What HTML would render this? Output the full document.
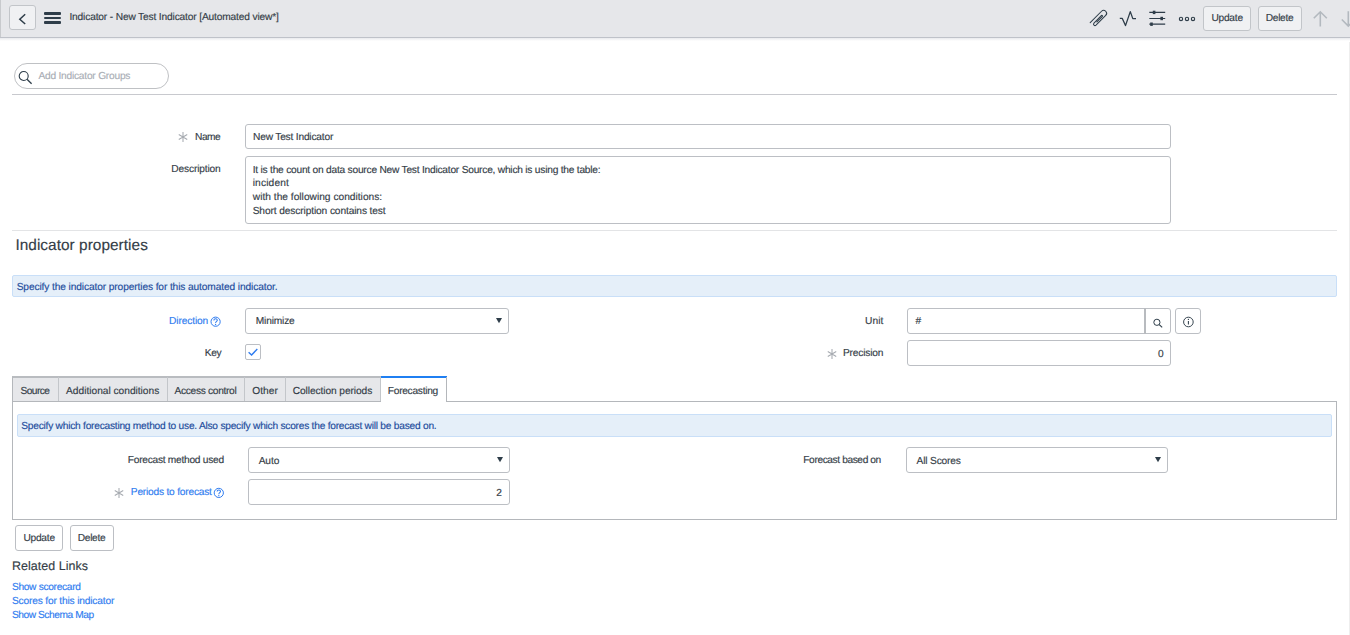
<!DOCTYPE html>
<html><head><meta charset="utf-8"><title>Indicator - New Test Indicator</title>
<style>
html,body{margin:0;padding:0;background:#fff;width:1350px;height:635px;overflow:hidden;position:relative;}
body{font-family:"Liberation Sans",sans-serif;}
.a{position:absolute;}
.t{position:absolute;white-space:nowrap;line-height:1;text-rendering:geometricPrecision;-webkit-text-stroke:0.15px currentColor;font-family:"Liberation Sans",sans-serif;}
.ast{position:absolute;font-family:"Liberation Sans",sans-serif;font-size:13px;line-height:1;color:#a6aaaf;}
</style></head><body>
<div class="a" style="left:0px;top:0px;width:1350px;height:37px;background:#e6e7ea;"></div>
<div class="a" style="left:0px;top:37px;width:1350px;height:1px;background:#bfc2c9;"></div>
<div class="a" style="left:0px;top:38px;width:1350px;height:3px;background:linear-gradient(#e9eaed,#fff);"></div>
<div class="a" style="left:0px;top:0px;width:1px;height:37px;background:#c8cacd;"></div>
<div class="a" style="left:9px;top:5px;width:27px;height:25px;background:#f0f1f3;border:1px solid #c2c5c9;border-radius:3px;box-sizing:border-box;"></div>
<svg class="a" style="left:9px;top:5px" width="26" height="25" viewBox="0 0 26 25"><path d="M16.2 9.3 L10.8 14.2 L16.2 19" fill="none" stroke="#2e3d49" stroke-width="1.5"/></svg>
<div class="a" style="left:44px;top:12px;width:17px;height:2.6px;background:#2e3d49;border-radius:1px;"></div>
<div class="a" style="left:44px;top:16.8px;width:17px;height:2.6px;background:#2e3d49;border-radius:1px;"></div>
<div class="a" style="left:44px;top:21.3px;width:17px;height:2.6px;background:#2e3d49;border-radius:1px;"></div>
<div class="t" style="left:69.40px;top:13px;font-size:10.2px;letter-spacing:-0.153px;color:#343d47;">Indicator - New Test Indicator [Automated view*]</div>
<svg class="a" style="left:1086px;top:6px" width="24" height="24" viewBox="0 0 24 24"><path d="M4.2 16.6 L15.55 5.25 A2.93 2.93 0 0 1 19.7 9.4 L10 19.1 A1.45 1.45 0 0 1 7.95 17.05 L15.5 9.5 A0.64 0.64 0 0 1 16.4 10.4 L10.9 15.9" fill="none" stroke="#2e3d49" stroke-width="1.05" stroke-linecap="round"/></svg>
<svg class="a" style="left:1118px;top:9px" width="20" height="20" viewBox="0 0 20 20"><path d="M1.8 9.4 L4.3 9.4 L7.5 16.6 L12.3 2.6 L14.8 9.6 L18 9.6" fill="none" stroke="#2e3d49" stroke-width="1.3" stroke-linejoin="round"/></svg>
<svg class="a" style="left:1148px;top:9px" width="20" height="20" viewBox="0 0 20 20"><path d="M1.3 3.4 H17.2 M1.3 9.5 H17.2 M1.3 15.2 H17.2" stroke="#2e3d49" stroke-width="1.2"/><rect x="4.8" y="1.7" width="2.6" height="3.4" fill="#2e3d49"/><rect x="12.4" y="7.8" width="2.6" height="3.4" fill="#2e3d49"/><rect x="2.2" y="13.5" width="2.6" height="3.4" fill="#2e3d49"/></svg>
<svg class="a" style="left:1177px;top:14px" width="20" height="9" viewBox="0 0 20 9"><circle cx="4" cy="4.9" r="1.65" fill="none" stroke="#2e3d49" stroke-width="1.15"/><circle cx="10" cy="4.9" r="1.65" fill="none" stroke="#2e3d49" stroke-width="1.15"/><circle cx="16" cy="4.9" r="1.65" fill="none" stroke="#2e3d49" stroke-width="1.15"/></svg>
<div class="a" style="left:1203px;top:6px;width:48px;height:25px;background:#f0f1f3;border:1px solid #c2c5c9;border-radius:3px;box-sizing:border-box;"></div>
<div class="t" style="left:1211.40px;top:14px;font-size:10.2px;letter-spacing:-0.240px;color:#343d47;">Update</div>
<div class="a" style="left:1258px;top:6px;width:44px;height:25px;background:#f0f1f3;border:1px solid #c2c5c9;border-radius:3px;box-sizing:border-box;"></div>
<div class="t" style="left:1265.80px;top:14px;font-size:10.2px;letter-spacing:-0.334px;color:#343d47;">Delete</div>
<svg class="a" style="left:1300px;top:0px" width="50" height="37" viewBox="0 0 50 37"><path d="M20.3 11.6 V26.6 M13.8 18.3 L20.3 11.8 L26.8 18.3 M48.3 11.2 V26.2 M41.8 19.5 L48.3 26 L54.8 19.5" fill="none" stroke="#b3b9bf" stroke-width="1.6"/></svg>
<div class="a" style="left:1349px;top:42px;width:1px;height:593px;background:#eeeeee;"></div>
<div class="a" style="left:14px;top:63px;width:155px;height:26px;border:1px solid #bfc1c4;border-radius:13px;box-sizing:border-box;background:#fff;"></div>
<svg class="a" style="left:16px;top:69px" width="20" height="18" viewBox="0 0 20 18"><circle cx="7.7" cy="7" r="4.5" fill="none" stroke="#2e3d49" stroke-width="1.1"/><path d="M11 10.2 L15.6 14.7" stroke="#2e3d49" stroke-width="1.3"/></svg>
<div class="t" style="left:38.40px;top:72px;font-size:10.2px;letter-spacing:-0.222px;color:#a9aeb5;">Add Indicator Groups</div>
<div class="a" style="left:12px;top:94px;width:1325px;height:1px;background:#c8c9ce;"></div>
<svg class="a" style="left:177.20px;top:130.90px" width="12" height="12" viewBox="0 0 12 12"><path d="M6.00 1.10 L6.00 10.90 M10.24 3.55 L1.76 8.45 M10.24 8.45 L1.76 3.55 " stroke="#a7abb1" stroke-width="1.05" fill="none"/></svg>
<div class="t" style="left:195.00px;top:133px;font-size:10.2px;letter-spacing:-0.470px;color:#343d47;">Name</div>
<div class="a" style="left:245px;top:124px;width:926px;height:25px;border:1px solid #bcbfc4;border-radius:3px;box-sizing:border-box;"></div>
<div class="t" style="left:253.00px;top:133px;font-size:10.2px;letter-spacing:-0.195px;color:#343d47;">New Test Indicator</div>
<div class="t" style="left:171.30px;top:165px;font-size:10.2px;letter-spacing:-0.150px;color:#343d47;">Description</div>
<div class="a" style="left:245px;top:156px;width:926px;height:68px;border:1px solid #bcbfc4;border-radius:3px;box-sizing:border-box;"></div>
<div class="t" style="left:252.70px;top:166px;font-size:10.2px;letter-spacing:-0.223px;color:#343d47;">It is the count on data source New Test Indicator Source, which is using the table:</div>
<div class="t" style="left:252.70px;top:179px;font-size:10.2px;letter-spacing:0.159px;color:#343d47;">incident</div>
<div class="t" style="left:252.80px;top:193px;font-size:10.2px;letter-spacing:0.009px;color:#343d47;">with the following conditions:</div>
<div class="t" style="left:252.70px;top:207px;font-size:10.2px;letter-spacing:-0.116px;color:#343d47;">Short description contains test</div>
<div class="a" style="left:12px;top:230px;width:1325px;height:1px;background:#e3e4e6;"></div>
<div class="t" style="left:15.40px;top:238px;font-size:15.4px;letter-spacing:0.037px;color:#343d47;">Indicator properties</div>
<div class="a" style="left:12px;top:275px;width:1325px;height:22px;background:#e5eff9;border:1px solid #c9dff8;border-radius:2px;box-sizing:border-box;"></div>
<div class="t" style="left:16.70px;top:283px;font-size:10.2px;letter-spacing:-0.114px;color:#1d4c9c;">Specify the indicator properties for this automated indicator.</div>
<div class="t" style="left:169.10px;top:317px;font-size:10.2px;letter-spacing:-0.130px;color:#2f7cf0;">Direction</div>
<svg class="a" style="left:210px;top:316px" width="12" height="12" viewBox="0 0 12 12"><circle cx="5.6" cy="5.7" r="4.6" fill="none" stroke="#2f7cf0" stroke-width="1"/><path d="M3.9 4.4 C3.9 3.3 4.7 2.8 5.6 2.8 C6.6 2.8 7.3 3.4 7.3 4.3 C7.3 5.4 5.6 5.5 5.6 7" fill="none" stroke="#2f7cf0" stroke-width="1.05"/><circle cx="5.6" cy="8.5" r="0.65" fill="#2f7cf0"/></svg>
<div class="a" style="left:245px;top:308px;width:264px;height:26px;border:1px solid #bcbfc4;border-radius:3px;box-sizing:border-box;"></div>
<div class="t" style="left:255.80px;top:317px;font-size:10.2px;letter-spacing:-0.181px;color:#343d47;">Minimize</div>
<svg class="a" style="left:495px;top:317px" width="8" height="7" viewBox="0 0 8 7"><path d="M1 1 H7 L4 6.3 Z" fill="#2e3d49"/></svg>
<div class="t" style="left:204.80px;top:349px;font-size:10.2px;letter-spacing:-0.424px;color:#343d47;">Key</div>
<div class="a" style="left:245px;top:344px;width:16px;height:16px;border:1px solid #bcbfc4;border-radius:2px;box-sizing:border-box;"></div>
<svg class="a" style="left:245px;top:344px" width="16" height="16" viewBox="0 0 16 16"><path d="M3.6 8.2 L6.6 11 L12.3 5" fill="none" stroke="#2f7cf0" stroke-width="1.4"/></svg>
<div class="t" style="left:865.00px;top:317px;font-size:10.2px;letter-spacing:0.085px;color:#343d47;">Unit</div>
<div class="a" style="left:907px;top:308px;width:264px;height:26px;border:1px solid #bcbfc4;border-radius:3px;box-sizing:border-box;"></div>
<div class="a" style="left:1144px;top:308px;width:1.5px;height:26px;background:#b8bbbf;"></div>
<div class="t" style="left:915.40px;top:317px;font-size:10.2px;letter-spacing:0.420px;color:#343d47;">#</div>
<svg class="a" style="left:1150px;top:315px" width="14" height="14" viewBox="0 0 14 14"><circle cx="6.9" cy="7.3" r="3.1" fill="none" stroke="#2e3d49" stroke-width="1"/><path d="M9.2 9.6 L12.2 12.4" stroke="#2e3d49" stroke-width="1.15"/></svg>
<div class="a" style="left:1175px;top:308px;width:26px;height:26px;border:1px solid #bcbfc4;border-radius:3px;box-sizing:border-box;"></div>
<svg class="a" style="left:1181px;top:315px" width="14" height="14" viewBox="0 0 14 14"><circle cx="7.4" cy="7" r="4.8" fill="none" stroke="#2e3d49" stroke-width="0.95"/><path d="M7.4 5.9 V9.6" stroke="#2e3d49" stroke-width="1.05"/><circle cx="7.4" cy="4.4" r="0.65" fill="#2e3d49"/></svg>
<svg class="a" style="left:825.50px;top:348.00px" width="12" height="12" viewBox="0 0 12 12"><path d="M6.00 1.10 L6.00 10.90 M10.24 3.55 L1.76 8.45 M10.24 8.45 L1.76 3.55 " stroke="#a7abb1" stroke-width="1.05" fill="none"/></svg>
<div class="t" style="left:843.00px;top:349px;font-size:10.2px;letter-spacing:-0.195px;color:#343d47;">Precision</div>
<div class="a" style="left:907px;top:340px;width:264px;height:26px;border:1px solid #bcbfc4;border-radius:3px;box-sizing:border-box;"></div>
<div class="t" style="left:1158.00px;top:350px;font-size:10.2px;letter-spacing:0.420px;color:#343d47;">0</div>
<div class="a" style="left:12px;top:401px;width:1325px;height:119px;border:1px solid #b4b7bb;box-sizing:border-box;"></div>
<div class="a" style="left:12px;top:376px;width:369px;height:26px;background:#e6e7ea;border-top:2px solid #b9bcc0;border-left:1px solid #b4b7bb;border-bottom:1px solid #b4b7bb;box-sizing:border-box;"></div>
<div class="a" style="left:381px;top:401px;width:65px;height:1px;background:#fff;"></div>
<div class="a" style="left:58px;top:377px;width:1px;height:24px;background:#c3c6ca;"></div>
<div class="a" style="left:167px;top:377px;width:1px;height:24px;background:#c3c6ca;"></div>
<div class="a" style="left:244px;top:377px;width:1px;height:24px;background:#c3c6ca;"></div>
<div class="a" style="left:285px;top:377px;width:1px;height:24px;background:#c3c6ca;"></div>
<div class="a" style="left:380px;top:377px;width:1px;height:24px;background:#c3c6ca;"></div>
<div class="a" style="left:381px;top:376px;width:66px;height:2px;background:#1f7ff2;"></div>
<div class="a" style="left:446px;top:377px;width:1px;height:25px;background:#b4b7bb;"></div>
<div class="t" style="left:20.40px;top:387px;font-size:10.2px;letter-spacing:-0.526px;color:#343d47;">Source</div>
<div class="t" style="left:66.10px;top:387px;font-size:10.2px;letter-spacing:-0.015px;color:#343d47;">Additional conditions</div>
<div class="t" style="left:174.50px;top:387px;font-size:10.2px;letter-spacing:-0.311px;color:#343d47;">Access control</div>
<div class="t" style="left:252.30px;top:387px;font-size:10.2px;letter-spacing:0.025px;color:#343d47;">Other</div>
<div class="t" style="left:292.70px;top:387px;font-size:10.2px;letter-spacing:-0.085px;color:#343d47;">Collection periods</div>
<div class="t" style="left:387.80px;top:387px;font-size:10.2px;letter-spacing:-0.280px;color:#343d47;">Forecasting</div>
<div class="a" style="left:17px;top:414px;width:1315px;height:23px;background:#e5eff9;border:1px solid #c9dff8;border-radius:2px;box-sizing:border-box;"></div>
<div class="t" style="left:21.30px;top:422px;font-size:10.2px;letter-spacing:-0.239px;color:#1d4c9c;">Specify which forecasting method to use. Also specify which scores the forecast will be based on.</div>
<div class="t" style="left:127.80px;top:456px;font-size:10.2px;letter-spacing:-0.267px;color:#343d47;">Forecast method used</div>
<div class="a" style="left:248px;top:447px;width:262px;height:26px;border:1px solid #bcbfc4;border-radius:3px;box-sizing:border-box;"></div>
<div class="t" style="left:258.70px;top:457px;font-size:10.2px;letter-spacing:-0.110px;color:#343d47;">Auto</div>
<svg class="a" style="left:496px;top:456px" width="8" height="7" viewBox="0 0 8 7"><path d="M1 1 H7 L4 6.3 Z" fill="#2e3d49"/></svg>
<svg class="a" style="left:113.20px;top:487.30px" width="12" height="12" viewBox="0 0 12 12"><path d="M6.00 1.10 L6.00 10.90 M10.24 3.55 L1.76 8.45 M10.24 8.45 L1.76 3.55 " stroke="#a7abb1" stroke-width="1.05" fill="none"/></svg>
<div class="t" style="left:130.80px;top:488px;font-size:10.2px;letter-spacing:-0.211px;color:#2f7cf0;">Periods to forecast</div>
<svg class="a" style="left:213px;top:487px" width="12" height="12" viewBox="0 0 12 12"><circle cx="5.8" cy="5.9" r="4.6" fill="none" stroke="#2f7cf0" stroke-width="1"/><path d="M4.1 4.6 C4.1 3.5 4.9 3 5.8 3 C6.8 3 7.5 3.6 7.5 4.5 C7.5 5.6 5.8 5.7 5.8 7.2" fill="none" stroke="#2f7cf0" stroke-width="1.05"/><circle cx="5.8" cy="8.7" r="0.65" fill="#2f7cf0"/></svg>
<div class="a" style="left:248px;top:479px;width:262px;height:26px;border:1px solid #bcbfc4;border-radius:3px;box-sizing:border-box;"></div>
<div class="t" style="left:496.30px;top:489px;font-size:10.2px;letter-spacing:0.420px;color:#343d47;">2</div>
<div class="t" style="left:803.30px;top:456px;font-size:10.2px;letter-spacing:-0.401px;color:#343d47;">Forecast based on</div>
<div class="a" style="left:906px;top:447px;width:262px;height:26px;border:1px solid #bcbfc4;border-radius:3px;box-sizing:border-box;"></div>
<div class="t" style="left:916.60px;top:457px;font-size:10.2px;letter-spacing:-0.172px;color:#343d47;">All Scores</div>
<svg class="a" style="left:1154px;top:456px" width="8" height="7" viewBox="0 0 8 7"><path d="M1 1 H7 L4 6.3 Z" fill="#2e3d49"/></svg>
<div class="a" style="left:15px;top:525px;width:48px;height:26px;border:1px solid #bcbfc4;border-radius:3px;box-sizing:border-box;background:#fff;"></div>
<div class="t" style="left:23.40px;top:534px;font-size:10.2px;letter-spacing:-0.240px;color:#343d47;">Update</div>
<div class="a" style="left:70px;top:525px;width:44px;height:26px;border:1px solid #bcbfc4;border-radius:3px;box-sizing:border-box;background:#fff;"></div>
<div class="t" style="left:77.80px;top:534px;font-size:10.2px;letter-spacing:-0.334px;color:#343d47;">Delete</div>
<div class="t" style="left:11.90px;top:560px;font-size:12.44px;letter-spacing:0.058px;color:#343d47;">Related Links</div>
<div class="t" style="left:11.90px;top:583px;font-size:10.2px;letter-spacing:-0.310px;color:#2f7cf0;">Show scorecard</div>
<div class="t" style="left:11.90px;top:597px;font-size:10.2px;letter-spacing:-0.167px;color:#2f7cf0;">Scores for this indicator</div>
<div class="t" style="left:11.90px;top:611px;font-size:10.2px;letter-spacing:-0.439px;color:#2f7cf0;">Show Schema Map</div>
</body></html>
